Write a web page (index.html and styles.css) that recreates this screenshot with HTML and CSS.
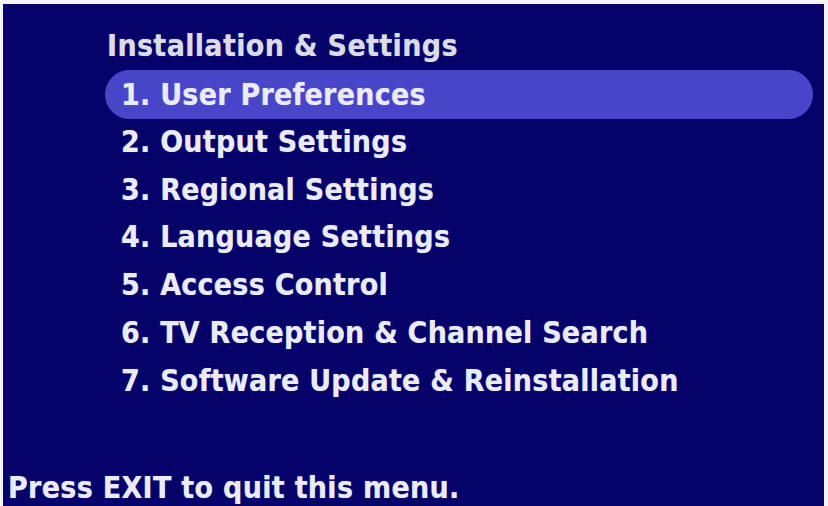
FILE: index.html
```html
<!DOCTYPE html>
<html lang="en">
<head>
<meta charset="utf-8">
<title>Installation &amp; Settings</title>
<link rel="stylesheet" href="styles.css">
</head>
<body>
<div class="screen">
  <div class="title">Installation &amp; Settings</div>
  <ul class="menu">
    <li class="item selected">1. User Preferences</li>
    <li class="item">2. Output Settings</li>
    <li class="item">3. Regional Settings</li>
    <li class="item">4. Language Settings</li>
    <li class="item">5. Access Control</li>
    <li class="item">6. TV Reception &amp; Channel Search</li>
    <li class="item">7. Software Update &amp; Reinstallation</li>
  </ul>
  <div class="footer">Press EXIT to quit this menu.</div>
</div>
</body>
</html>
```
FILE: styles.css
```css
html, body {
  margin: 0;
  padding: 0;
  background: #f4f4f8;
}
.screen {
  margin: 4px 4px 0 3px;
  height: 502px;
  background: #05036a;
  display: flex;
  flex-direction: column;
  overflow: hidden;
  font-family: "DejaVu Sans Condensed", "DejaVu Sans", sans-serif;
  font-stretch: semi-condensed;
  font-weight: bold;
  font-size: 30px;
  letter-spacing: 0.25px;
  color: #ebebf5;
  text-shadow: 0 0 1px rgba(230, 230, 255, 0.5);
}
.title {
  padding: 18px 0 0 104px;
  line-height: 48px;
  letter-spacing: 0.35px;
  color: #dcdce6;
}
.menu {
  list-style: none;
  margin: 0 0 0 102px;
  padding: 0;
  width: 708px;
}
.item {
  line-height: 47.7px;
  padding-left: 16px;
  white-space: nowrap;
}
.selected {
  background: #4846c8;
  border-radius: 25px;
  line-height: 49px;
  margin-bottom: -1px;
}
.footer {
  margin-top: auto;
  padding-left: 5px;
  line-height: 36px;
  letter-spacing: 0.3px;
}
```
